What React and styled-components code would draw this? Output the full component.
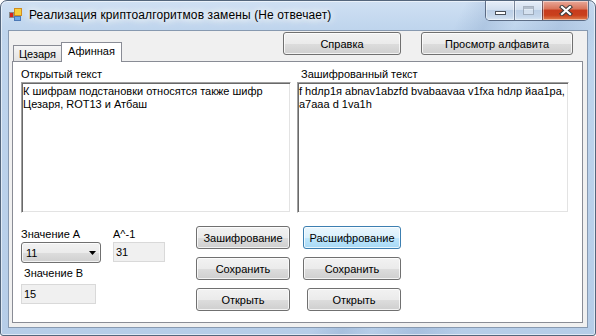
import styled, { createGlobalStyle } from "styled-components";

const GlobalStyle = createGlobalStyle`
  html, body {
    margin: 0;
    padding: 0;
    background: #ffffff;
  }
  body {
    font-family: "Liberation Sans", Arial, sans-serif;
    font-size: 11px;
    color: #000;
  }
  * {
    box-sizing: border-box;
  }
`;

const AppIcon = () => (
  <svg width="13" height="13" viewBox="0 0 13 13">
    <rect x="0.5" y="4.5" width="4" height="5" fill="#d8261c" stroke="#8a8a8a" />
    <rect x="5.5" y="0.5" width="7" height="7" fill="#f7cf3a" stroke="#d08a1c" />
    <rect x="5.5" y="8.5" width="6" height="4" fill="#6fa8e6" stroke="#4b78b6" />
  </svg>
);

const CloseGlyph = () => (
  <svg width="14" height="11" viewBox="0 0 14 11">
    <path d="M3 2 L11 9 M11 2 L3 9" stroke="#3b3b3b" strokeWidth="4.2" strokeLinecap="square" />
    <path d="M3 2 L11 9 M11 2 L3 9" stroke="#ffffff" strokeWidth="2.2" strokeLinecap="square" />
  </svg>
);

const ArrowGlyph = () => (
  <svg width="7" height="4" viewBox="0 0 7 4">
    <path d="M0 0 H7 L3.5 4 Z" fill="#000" />
  </svg>
);

const App = () => {
  return (
    <>
      <GlobalStyle />
      <Window>
        <TitleBar>
          <IconSlot>
            <AppIcon />
          </IconSlot>
          <TitleText>Реализация криптоалгоритмов замены (Не отвечает)</TitleText>
          <CaptionGroup>
            <CaptionButton $kind="min">
              <MinGlyph />
            </CaptionButton>
            <CaptionButton $kind="max">
              <MaxGlyph />
            </CaptionButton>
            <CaptionButton $kind="close">
              <CloseGlyph />
            </CaptionButton>
          </CaptionGroup>
        </TitleBar>

        <Client>
          <Header>
            <TabStrip>
              <Tab>Цезаря</Tab>
              <Tab $active>Афинная</Tab>
            </TabStrip>
            <HeaderButtons>
              <Button $width={118}>Справка</Button>
              <Button $width={152}>Просмотр алфавита</Button>
            </HeaderButtons>
          </Header>

          <TabPanel>
            <TextColumns>
              <TextColumn $width={270}>
                <FieldLabel>Открытый текст</FieldLabel>
                <TextBox
                  readOnly
                  wrap="off"
                  value={"К шифрам подстановки относятся также шифр\nЦезаря, ROT13 и Атбаш"}
                />
              </TextColumn>
              <TextColumn $width={272}>
                <FieldLabel $indent={4}>Зашифрованный текст</FieldLabel>
                <TextBox
                  readOnly
                  wrap="off"
                  value={"f hdлр1я abnav1abzfd bvabaavaa v1fxa hdлр йаа1ра,\na7aaa d 1va1h"}
                />
              </TextColumn>
            </TextColumns>

            <BottomRow>
              <Params>
                <FieldLabel>Значение А</FieldLabel>
                <FieldLabel>A^-1</FieldLabel>
                <ComboBox>
                  <span>11</span>
                  <ArrowGlyph />
                </ComboBox>
                <ReadOnlyBox $width={52}>31</ReadOnlyBox>
                <FieldLabel $indent={3} $center>
                  Значение В
                </FieldLabel>
                <span />
                <ReadOnlyBox $width={75}>15</ReadOnlyBox>
              </Params>

              <ButtonColumn $offset={31}>
                <Button $width={94}>Зашифрование</Button>
                <Button $width={94}>Сохранить</Button>
                <Button $width={94}>Открыть</Button>
              </ButtonColumn>

              <ButtonColumn $offset={13}>
                <Button $width={98} $hot>
                  Расшифрование
                </Button>
                <Button $width={98}>Сохранить</Button>
                <Button $width={94}>Открыть</Button>
              </ButtonColumn>
            </BottomRow>
          </TabPanel>
        </Client>
      </Window>
    </>
  );
};

export default App;

const Window = styled.div`
  width: 596px;
  height: 336px;
  display: flex;
  flex-direction: column;
  border: 1px solid #54667c;
  border-radius: 7px 7px 3px 3px;
  overflow: hidden;
  background:
    linear-gradient(115deg, rgba(255, 255, 255, 0) 62%, rgba(120, 150, 190, 0.25) 66%, rgba(255, 255, 255, 0) 70%, rgba(110, 140, 185, 0.22) 76%, rgba(255, 255, 255, 0) 82%),
    linear-gradient(180deg, #cfe0f3 0px, #bfd5ed 28px, #b6cde8 100%);
  box-shadow: inset 0 0 0 1px rgba(255, 255, 255, 0.55);
`;

const TitleBar = styled.div`
  height: 29px;
  display: flex;
  align-items: flex-start;
  flex-shrink: 0;
`;

const IconSlot = styled.div`
  margin: 7px 0 0 8px;
  width: 13px;
  height: 13px;
  display: flex;
`;

const TitleText = styled.div`
  margin: 7px 0 0 7px;
  font-family: "Liberation Sans", Arial, sans-serif;
  font-size: 12px;
  line-height: 15px;
  letter-spacing: 0.12px;
  color: #000;
  white-space: nowrap;
  text-shadow: 0 0 6px #ffffff, 0 0 10px #ffffff, 0 0 14px rgba(255, 255, 255, 0.9);
`;

const CaptionGroup = styled.div`
  margin-left: auto;
  margin-right: 6px;
  display: flex;
  height: 20px;
  border: 1px solid rgba(40, 55, 80, 0.65);
  border-top: none;
  border-radius: 0 0 5px 5px;
  overflow: hidden;
`;

const CaptionButton = styled.div`
  width: ${(p) => (p.$kind === "close" ? 46 : 28)}px;
  height: 100%;
  display: flex;
  align-items: center;
  justify-content: center;
  border-left: ${(p) => (p.$kind === "min" ? "none" : "1px solid rgba(40, 55, 80, 0.55)")};
  background: ${(p) =>
    p.$kind === "close"
      ? "linear-gradient(180deg, #e9a99a 0%, #d9765d 40%, #c73c1d 50%, #c9401c 75%, #e0804f 100%)"
      : "linear-gradient(180deg, #e6eef8 0%, #d3e0ef 45%, #bccfe6 50%, #c5d6ea 80%, #d9e6f3 100%)"};
  box-shadow: inset 0 0 0 1px rgba(255, 255, 255, 0.45);
`;

const MinGlyph = styled.div`
  width: 11px;
  height: 4px;
  margin-top: 5px;
  background: #ffffff;
  border: 1px solid #4a4f58;
`;

const MaxGlyph = styled.div`
  width: 11px;
  height: 9px;
  border: 1px solid rgba(90, 105, 125, 0.45);
  box-shadow: inset 0 2px 0 rgba(90, 105, 125, 0.35);
  background: rgba(255, 255, 255, 0.35);
`;

const Client = styled.div`
  flex: 1;
  margin: 0 7px 7px 7px;
  border: 1px solid #8799b0;
  background: #f0f0f0;
  display: flex;
  flex-direction: column;
  padding: 0 4px 4px 3px;
`;

const Header = styled.div`
  height: 30px;
  display: flex;
  padding-left: 1px;
  flex-shrink: 0;
`;

const TabStrip = styled.div`
  align-self: flex-end;
  display: flex;
  align-items: flex-end;
  margin-bottom: -1px;
  position: relative;
  z-index: 1;
`;

const Tab = styled.div`
  display: flex;
  align-items: center;
  justify-content: center;
  border: 1px solid #898c95;
  border-bottom: none;
  white-space: nowrap;
  line-height: 13px;
  ${(p) =>
    p.$active
      ? `
    width: 61px;
    height: 20px;
    margin-left: -1px;
    padding-bottom: 2px;
    background: #ffffff;
  `
      : `
    width: 49px;
    height: 16px;
    margin-bottom: 1px;
    padding-top: 1px;
    background: linear-gradient(180deg, #f6f6f6 0%, #ebebeb 50%, #e3e3e3 100%);
  `}
`;

const HeaderButtons = styled.div`
  margin: 1px 10px 0 auto;
  align-self: flex-start;
  display: flex;
  gap: 20px;
`;

const Button = styled.button`
  width: ${(p) => p.$width}px;
  height: 23px;
  flex-shrink: 0;
  padding: 0;
  font-family: "Liberation Sans", Arial, sans-serif;
  font-size: 11px;
  color: #000;
  border-radius: 3px;
  border: 1px solid ${(p) => (p.$hot ? "#3c7fb1" : "#707070")};
  background: ${(p) =>
    p.$hot
      ? "linear-gradient(180deg, #eaf6fd 0%, #d9f0fc 50%, #bee6fd 51%, #a7d9f5 100%)"
      : "linear-gradient(180deg, #f2f2f2 0%, #ebebeb 50%, #dddddd 51%, #cfcfcf 100%)"};
  box-shadow: inset 0 0 0 1px rgba(255, 255, 255, 0.75);
`;

const TabPanel = styled.div`
  flex: 1;
  border: 1px solid #898c95;
  background: #ffffff;
  display: flex;
  flex-direction: column;
  padding: 6px 0 0 8px;
`;

const TextColumns = styled.div`
  display: flex;
  gap: 6px;
`;

const TextColumn = styled.div`
  width: ${(p) => p.$width}px;
  display: flex;
  flex-direction: column;
  gap: 1px;
`;

const FieldLabel = styled.div`
  height: 13px;
  line-height: 13px;
  padding-left: ${(p) => p.$indent || 0}px;
  white-space: nowrap;
  align-self: ${(p) => (p.$center ? "center" : "start")};
`;

const TextBox = styled.textarea`
  display: block;
  width: 100%;
  height: 131px;
  margin: 0;
  padding: 2px 1px 1px 1px;
  resize: none;
  overflow: hidden;
  font-family: "Liberation Sans", Arial, sans-serif;
  font-size: 11px;
  line-height: 13px;
  color: #000;
  background: #ffffff;
  border: 1px solid;
  border-color: #a0a0a0 #ffffff #ffffff #a0a0a0;
  box-shadow: inset 1px 1px 0 #696969, inset -1px -1px 0 #e3e3e3;
  outline: none;
`;

const BottomRow = styled.div`
  display: flex;
  align-items: flex-start;
  margin-top: 13px;
`;

const Params = styled.div`
  margin-top: 2px;
  display: grid;
  grid-template-columns: 80px 52px;
  grid-template-rows: 14px 21px 21px 20px;
  column-gap: 12px;
`;

const ComboBox = styled.div`
  height: 21px;
  display: flex;
  align-items: center;
  justify-content: space-between;
  padding: 0 4px 0 4px;
  border: 1px solid #707070;
  border-radius: 3px;
  background: linear-gradient(180deg, #f2f2f2 0%, #ebebeb 50%, #dddddd 51%, #cfcfcf 100%);
  box-shadow: inset 0 0 0 1px rgba(255, 255, 255, 0.75);
`;

const ReadOnlyBox = styled.div`
  width: ${(p) => p.$width}px;
  height: 20px;
  display: flex;
  align-items: center;
  padding-left: 2px;
  background: #f0f0f0;
  border: 1px solid #d9d9d9;
`;

const ButtonColumn = styled.div`
  margin-left: ${(p) => p.$offset}px;
  display: flex;
  flex-direction: column;
  align-items: flex-end;
  gap: 8px;
`;
